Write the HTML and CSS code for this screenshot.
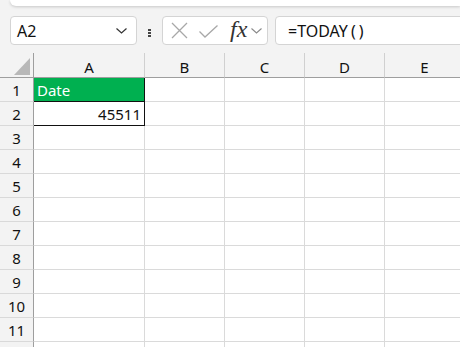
FILE: index.html
```
<!DOCTYPE html>
<html lang="en">
<head>
    <meta charset="UTF-8">
    <meta name="viewport" content="width=device-width, initial-scale=1.0">
    <title>Sheet</title>
    <link rel="stylesheet" href="styles.css">
</head>
<body>

<div class="topbar"></div>

<div class="formula-bar">
    <div class="name-box">
        <span>A2</span>
        <svg class="chevron" width="11" height="6" viewBox="0 0 11 6"><path d="M0.5 0.5 L5.5 5 L10.5 0.5" fill="none" stroke="#333" stroke-width="1.2"/></svg>
    </div>
    <div class="dots"><i></i><i></i><i></i></div>
    <div class="fx-buttons">
        <svg width="17" height="17" viewBox="0 0 17 17"><path d="M1 1 L16 16 M16 1 L1 16" stroke="#a8a8a8" stroke-width="1.3" fill="none"/></svg>
        <svg width="19" height="13" viewBox="0 0 19 13"><path d="M0.5 6.5 L6 12 L18.5 0.5" stroke="#a8a8a8" stroke-width="1.3" fill="none"/></svg>
        <span class="fx">fx</span>
        <svg width="11" height="6" viewBox="0 0 11 6"><path d="M0.5 0.5 L5.5 5 L10.5 0.5" fill="none" stroke="#8a8a8a" stroke-width="1.1"/></svg>
    </div>
    <div class="formula-input">=TODAY<span class="paren">(</span><span class="paren">)</span></div>
</div>

<div class="sheet">
    <div class="corner"><div class="select-all"></div></div>
    <div class="col-head">A</div>
    <div class="col-head">B</div>
    <div class="col-head">C</div>
    <div class="col-head">D</div>
    <div class="col-head">E</div>

    <div class="row-head">1</div>
    <div class="cell header-cell">Date</div>
    <div class="cell"></div><div class="cell"></div><div class="cell"></div><div class="cell"></div>

    <div class="row-head">2</div>
    <div class="cell num boxed">45511</div>
    <div class="cell"></div><div class="cell"></div><div class="cell"></div><div class="cell"></div>

    <div class="row-head">3</div><div class="cell"></div><div class="cell"></div><div class="cell"></div><div class="cell"></div><div class="cell"></div>
    <div class="row-head">4</div><div class="cell"></div><div class="cell"></div><div class="cell"></div><div class="cell"></div><div class="cell"></div>
    <div class="row-head">5</div><div class="cell"></div><div class="cell"></div><div class="cell"></div><div class="cell"></div><div class="cell"></div>
    <div class="row-head">6</div><div class="cell"></div><div class="cell"></div><div class="cell"></div><div class="cell"></div><div class="cell"></div>
    <div class="row-head">7</div><div class="cell"></div><div class="cell"></div><div class="cell"></div><div class="cell"></div><div class="cell"></div>
    <div class="row-head">8</div><div class="cell"></div><div class="cell"></div><div class="cell"></div><div class="cell"></div><div class="cell"></div>
    <div class="row-head">9</div><div class="cell"></div><div class="cell"></div><div class="cell"></div><div class="cell"></div><div class="cell"></div>
    <div class="row-head">10</div><div class="cell"></div><div class="cell"></div><div class="cell"></div><div class="cell"></div><div class="cell"></div>
    <div class="row-head">11</div><div class="cell"></div><div class="cell"></div><div class="cell"></div><div class="cell"></div><div class="cell"></div>
    <div class="row-head"></div><div class="cell"></div><div class="cell"></div><div class="cell"></div><div class="cell"></div><div class="cell"></div>
</div>

</body>
</html>
```

FILE: styles.css
```
body {
    margin: 0;
    width: 460px;
    height: 347px;
    overflow: hidden;
    background-color: #f3f3f3;
    font-family: "Noto Sans", "Open Sans", sans-serif;
    color: #111;
}
.topbar {
    height: 6px;
    margin-left: 10px;
    background: white;
    border-bottom-left-radius: 6px;
    box-shadow: 0 1px 3px rgba(0, 0, 0, 0.18);
}
.formula-bar {
    display: flex;
    align-items: center;
    height: 29px;
    margin-top: 10px;
    padding-left: 10px;
}
.name-box {
    box-sizing: border-box;
    width: 127px;
    height: 29px;
    display: flex;
    align-items: center;
    justify-content: space-between;
    padding: 0 9px 0 6px;
    background: white;
    border: 1px solid #d4d4d4;
    border-radius: 4px;
    font-size: 16px;
}
.dots {
    display: flex;
    flex-direction: column;
    gap: 1px;
    margin: 4px 11px 0 11px;
}
.dots i {
    display: block;
    width: 3px;
    height: 2px;
    background: #444;
}
.fx-buttons {
    box-sizing: border-box;
    width: 106px;
    height: 29px;
    display: flex;
    align-items: center;
    padding-left: 8px;
    background: white;
    border: 1px solid #d4d4d4;
    border-radius: 4px;
}
.fx-buttons svg:nth-child(2) {
    margin-left: 11px;
    margin-top: 1px;
}
.fx {
    margin-left: 12px;
    margin-right: 4px;
    font-family: "Liberation Serif", serif;
    font-style: italic;
    font-size: 24px;
    line-height: 1;
    color: #333;
    margin-top: -3px;
}
.formula-input {
    box-sizing: border-box;
    flex: 1;
    height: 29px;
    margin-left: 7px;
    margin-right: -10px;
    padding-left: 12px;
    display: flex;
    align-items: center;
    background: white;
    border: 1px solid #d4d4d4;
    border-radius: 4px;
    font-size: 16px;
}
.paren {
    margin-left: 3px;
}
.sheet {
    display: grid;
    grid-template-columns: 34px 111px 80px 80px 80px 80px;
    grid-template-rows: 25px;
    grid-auto-rows: 24px;
    margin-top: 8px;
    font-size: 15px;
}
.corner, .col-head {
    box-sizing: border-box;
    border-right: 1px solid #d0d0d0;
    border-bottom: 1px solid #9e9e9e;
    display: flex;
    align-items: center;
    justify-content: center;
}
.corner {
    border-right-color: #9e9e9e;
    justify-content: flex-end;
    align-items: flex-end;
    padding: 0 3px 2px 0;
}
.select-all {
    width: 16px;
    height: 17px;
    background: #b8b8b8;
    clip-path: polygon(100% 0, 100% 100%, 0 100%);
}
.col-head {
    padding-top: 3px;
}
.row-head {
    box-sizing: border-box;
    border-right: 1px solid #9e9e9e;
    border-bottom: 1px solid #d9d9d9;
    display: flex;
    align-items: center;
    justify-content: center;
}
.cell {
    box-sizing: border-box;
    background: white;
    border-right: 1px solid #dadada;
    border-bottom: 1px solid #dadada;
    display: flex;
    align-items: center;
    padding: 0 3px;
}
.header-cell {
    background: #00b050;
    color: white;
    border-right-color: #111;
}
.num {
    justify-content: flex-end;
}
.boxed {
    border-right-color: #111;
    border-bottom-color: #111;
    box-shadow: 0 -1px 0 #111;
}
```
